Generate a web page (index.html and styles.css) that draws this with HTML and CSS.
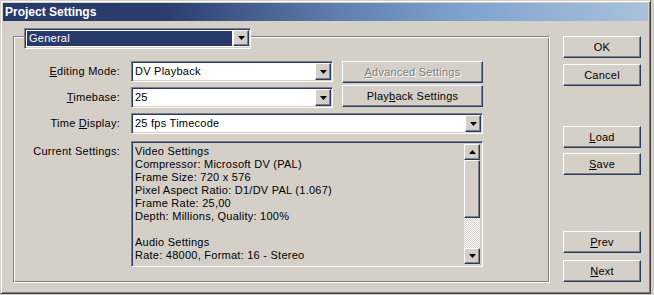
FILE: index.html
```html
<!DOCTYPE html>
<html lang="en">
<head>
    <meta charset="UTF-8">
    <title>Project Settings</title>
    <link rel="stylesheet" href="styles.css">
</head>
<body>
    <div class="window">
        <div class="titlebar">Project Settings</div>

        <div class="client">
            <div class="group">
                <!-- page selector sits on the group box frame -->
                <div class="combo legend">
                    <span class="combo-text selected">General</span>
                    <span class="arrow-btn">
                        <svg width="7" height="4" viewBox="0 0 7 4"><polygon points="0,0 7,0 3.5,4" fill="#000"/></svg>
                    </span>
                </div>

                <div class="form">
                    <label class="lbl"><u>E</u>diting Mode:</label>
                    <div class="combo">
                        <span class="combo-text">DV Playback</span>
                        <span class="arrow-btn">
                            <svg width="7" height="4" viewBox="0 0 7 4"><polygon points="0,0 7,0 3.5,4" fill="#000"/></svg>
                        </span>
                    </div>
                    <button class="btn btn-wide" disabled><span><u>A</u>dvanced Settings</span></button>

                    <label class="lbl lower"><u>T</u>imebase:</label>
                    <div class="combo lower">
                        <span class="combo-text">25</span>
                        <span class="arrow-btn">
                            <svg width="7" height="4" viewBox="0 0 7 4"><polygon points="0,0 7,0 3.5,4" fill="#000"/></svg>
                        </span>
                    </div>
                    <button class="btn btn-wide">Play<u>b</u>ack Settings</button>

                    <label class="lbl">Time <u>D</u>isplay:</label>
                    <div class="combo span">
                        <span class="combo-text">25 fps Timecode</span>
                        <span class="arrow-btn">
                            <svg width="7" height="4" viewBox="0 0 7 4"><polygon points="0,0 7,0 3.5,4" fill="#000"/></svg>
                        </span>
                    </div>

                    <label class="lbl lbl-top">Current Settings:</label>
                    <div class="summary span">
                        <div class="summary-text">
                            Video Settings<br>
                            Compressor: Microsoft DV (PAL)<br>
                            Frame Size: 720 x 576<br>
                            Pixel Aspect Ratio: D1/DV PAL (1.067)<br>
                            Frame Rate: 25,00<br>
                            Depth: Millions, Quality: 100%<br>
                            <br>
                            Audio Settings<br>
                            Rate: 48000, Format: 16 - Stereo
                        </div>
                        <div class="scrollbar">
                            <span class="arrow-btn sb-btn">
                                <svg width="7" height="4" viewBox="0 0 7 4"><polygon points="3.5,0 7,4 0,4" fill="#000"/></svg>
                            </span>
                            <span class="sb-thumb"></span>
                            <span class="sb-track"></span>
                            <span class="arrow-btn sb-btn">
                                <svg width="7" height="4" viewBox="0 0 7 4"><polygon points="0,0 7,0 3.5,4" fill="#000"/></svg>
                            </span>
                        </div>
                    </div>
                </div>
            </div>

            <div class="side">
                <button class="btn side-btn">OK</button>
                <button class="btn side-btn gap-s">Cancel</button>
                <button class="btn side-btn gap-l"><u>L</u>oad</button>
                <button class="btn side-btn gap-xs"><u>S</u>ave</button>
                <button class="btn side-btn gap-xl"><u>P</u>rev</button>
                <button class="btn side-btn gap-s"><u>N</u>ext</button>
            </div>
        </div>
    </div>
</body>
</html>
```

FILE: styles.css
```css
body {
    margin: 0;
    background-color: #d4d0c8;
    font-family: "Liberation Sans", Arial, sans-serif;
    font-size: 11px;
    letter-spacing: 0.25px;
    color: #000;
}

u {
    text-decoration: underline;
    text-underline-offset: 1px;
}

.window {
    width: 651px;
    height: 294px;
    box-sizing: border-box;
    border: 1px solid;
    border-color: #d4d0c8 #404040 #404040 #d4d0c8;
    box-shadow: inset 1px 1px 0 #fff, inset -1px -1px 0 #808080;
    padding: 2px;
    background-color: #d4d0c8;
}

.titlebar {
    height: 18px;
    line-height: 18px;
    padding-left: 2px;
    color: #fff;
    font-weight: bold;
    font-size: 12px;
    letter-spacing: 0;
    background: linear-gradient(to right, #283a6a 0%, #2b3d6d 25%, #5f7fae 52%, #7fa3cf 72%, #a9c1dc 100%);
}

.client {
    display: flex;
    padding: 15px 0 0 10px;
}

/* etched group frame */
.group {
    position: relative;
    width: 537px;
    height: 247px;
    box-sizing: border-box;
    border: 1px solid #808080;
    border-right-color: #fff;
    border-bottom-color: #fff;
    box-shadow: inset 1px 1px 0 #fff, inset -1px -1px 0 #808080;
}

.legend {
    position: absolute;
    left: 10px;
    top: -9px;
    width: 227px;
    height: 20px;
}

.selected {
    background-color: #283a6a;
    color: #fff;
    margin: 1px;
}

.form {
    display: grid;
    grid-template-columns: 117px 202px 150px;
    grid-template-rows: 24px 28px 28px auto;
    align-items: start;
    padding-top: 24px;
}

.lbl {
    height: 21px;
    line-height: 21px;
    padding-right: 11px;
    text-align: right;
}

.lbl-top {
    height: 13px;
    line-height: 13px;
    margin-top: 4px;
}

.lower {
    margin-top: 2px;
}

.span {
    grid-column: 2 / 4;
}

/* sunken drop-down */
.combo {
    display: flex;
    height: 21px;
    box-sizing: border-box;
    border: 1px solid;
    border-color: #808080 #fff #fff #808080;
    box-shadow: inset 1px 1px 0 #283a6a, inset -1px -1px 0 #d4d0c8;
    padding: 1px;
    background-color: #fff;
}

.combo-text {
    flex: 1;
    padding-left: 2px;
    line-height: 17px;
    white-space: nowrap;
}

.legend .combo-text {
    line-height: 15px;
    padding-left: 2px;
}

.arrow-btn {
    display: flex;
    align-items: center;
    justify-content: center;
    width: 16px;
    height: 17px;
    box-sizing: border-box;
    border: 1px solid;
    border-color: #fff #283a6a #283a6a #fff;
    box-shadow: inset -1px -1px 0 #808080;
    background-color: #d4d0c8;
}

.legend .arrow-btn {
    height: 16px;
}

.btn {
    height: 22px;
    box-sizing: border-box;
    border: 1px solid;
    border-color: #fff #283a6a #283a6a #fff;
    box-shadow: inset -1px -1px 0 #808080;
    background-color: #d4d0c8;
    font-family: "Liberation Sans", Arial, sans-serif;
    font-size: 11px;
    letter-spacing: 0.25px;
    color: #000;
    padding: 0;
}

.btn-wide {
    width: 141px;
    margin-left: 9px;
}

.btn:disabled {
    color: #808080;
}

.btn:disabled span {
    text-shadow: 1px 1px 0 #fff;
}

/* read-only settings list */
.summary {
    display: flex;
    height: 126px;
    box-sizing: border-box;
    border: 1px solid;
    border-color: #808080 #fff #fff #808080;
    box-shadow: inset 1px 1px 0 #283a6a, inset -1px -1px 0 #d4d0c8;
    padding: 2px;
}

.summary-text {
    flex: 1;
    line-height: 13px;
    padding: 1px 0 0 1px;
    overflow: hidden;
    white-space: nowrap;
}

.scrollbar {
    display: flex;
    flex-direction: column;
    width: 16px;
}

.sb-btn {
    height: 16px;
}

.sb-thumb {
    height: 58px;
    box-sizing: border-box;
    border: 1px solid;
    border-color: #fff #283a6a #283a6a #fff;
    box-shadow: inset -1px -1px 0 #808080;
}

.sb-track {
    flex: 1;
    background: repeating-conic-gradient(#fff 0 25%, #d4d0c8 0 50%) 0 0 / 2px 2px;
}

.side {
    display: flex;
    flex-direction: column;
    margin-left: 13px;
}

.side-btn {
    width: 78px;
}

.gap-xs {
    margin-top: 5px;
}

.gap-s {
    margin-top: 6px;
}

.gap-l {
    margin-top: 40px;
}

.gap-xl {
    margin-top: 56px;
}

.side-btn:last-child {
    margin-top: 7px;
}
```
